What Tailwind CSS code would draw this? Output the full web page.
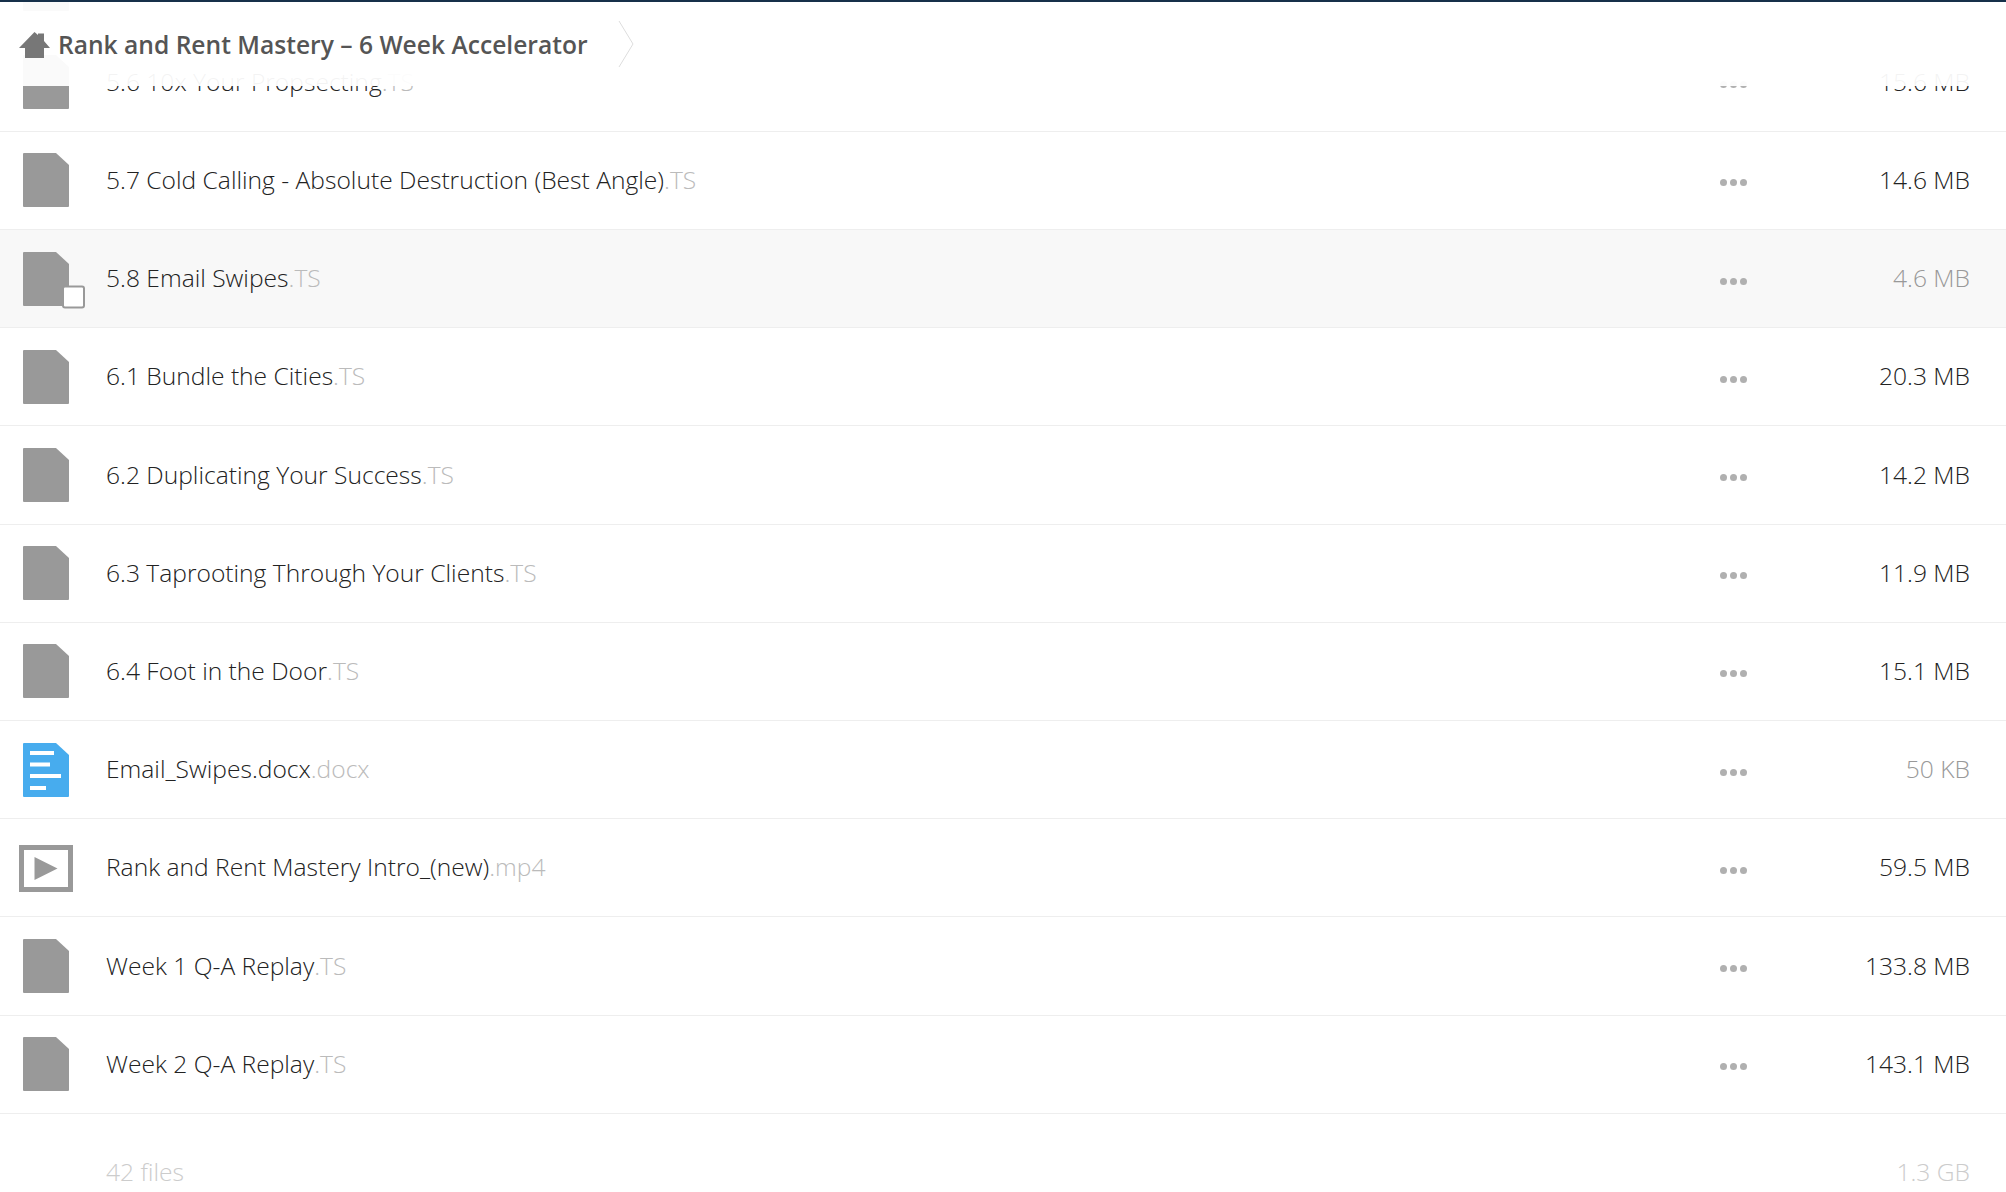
<!DOCTYPE html>
<html lang="en">
<head>
    <meta charset="UTF-8">
    <title>Rank and Rent Mastery – 6 Week Accelerator</title>
    <script src="https://cdn.jsdelivr.net/npm/@tailwindcss/browser@4"></script>
</head>
<body class="relative w-[2006px] h-[1192px] overflow-hidden bg-white font-['Open_Sans',sans-serif] font-light text-[24.6px] text-[#222]">

    <!-- breadcrumb sits over the scrolled list -->
    <div class="absolute top-0 left-0 right-0 z-10 h-[86px] bg-white/95 border-t-2 border-[#16304a] flex items-center">
        <svg class="ml-[19px] w-[31px] h-[26px] mt-[1px]" viewBox="0 0 31 26">
            <path d="M15.500 0 L19 3 L19 1.500 L25 1.500 L25 9 L31 16 L25 16 L25 26 L6 26 L6 16 L0 16 Z" fill="#777"/>
        </svg>
        <span class="ml-[8px] mt-[2px] font-semibold text-[#555]">Rank and Rent Mastery – 6 Week Accelerator</span>
        <svg class="ml-[30px] w-[16px] h-[46px]" viewBox="0 0 16 46">
            <path d="M1 0 L15 23 L1 46" fill="none" stroke="#ddd" stroke-width="1"/>
        </svg>
    </div>

    <div id="rows" class="-mt-[64.5px]"></div>

    <div class="flex h-[118px] items-center text-[#ccc]">
        <div class="w-[106px]"></div>
        <div class="flex-1">42 files</div>
        <div class="pr-[36px]">1.3 GB</div>
    </div>

    <script>
        const fileIcon = `<svg class="w-[54px] h-[54px]" viewBox="0 0 54 54"><path d="M5 0 L37 0 L50 12 L50 53 Q50 54 49 54 L5 54 Q4 54 4 53 L4 1 Q4 0 5 0 Z" fill="#999"/></svg>`;
        const hoverIcon = `<svg class="w-[54px] h-[54px] overflow-visible" viewBox="0 0 54 54"><path d="M5 0 L37 0 L50 12 L50 53 Q50 54 49 54 L5 54 Q4 54 4 53 L4 1 Q4 0 5 0 Z" fill="#999"/><rect x="44" y="34.500" width="21" height="21" rx="2" fill="#fff" stroke="#999" stroke-width="2"/></svg>`;
        const docIcon = `<svg class="w-[54px] h-[54px]" viewBox="0 0 54 54"><path d="M5 0 L37 0 L50 12 L50 53 Q50 54 49 54 L5 54 Q4 54 4 53 L4 1 Q4 0 5 0 Z" fill="#47acee"/><g fill="#fff"><rect x="11" y="8" width="24" height="4"/><rect x="11" y="19.500" width="20" height="4"/><rect x="11" y="31" width="31" height="4"/><rect x="11" y="43" width="16" height="4"/></g></svg>`;
        const videoIcon = `<svg class="w-[54px] h-[54px]" viewBox="0 0 54 54"><rect x="2.500" y="6.500" width="49" height="42" fill="none" stroke="#999" stroke-width="5"/><path d="M15.500 16 L38.500 27.500 L15.500 39 Z" fill="#999"/></svg>`;

        const files = [
            { icon: fileIcon }, // only the bottom of this icon shows under the breadcrumb
            { name: "5.6 10x Your Propsecting", ext: "TS", size: "15.6 MB", icon: fileIcon },
            { name: "5.7 Cold Calling - Absolute Destruction (Best Angle)", ext: "TS", size: "14.6 MB", icon: fileIcon },
            { name: "5.8 Email Swipes", ext: "TS", size: "4.6 MB", icon: hoverIcon, hover: true },
            { name: "6.1 Bundle the Cities", ext: "TS", size: "20.3 MB", icon: fileIcon },
            { name: "6.2 Duplicating Your Success", ext: "TS", size: "14.2 MB", icon: fileIcon },
            { name: "6.3 Taprooting Through Your Clients", ext: "TS", size: "11.9 MB", icon: fileIcon },
            { name: "6.4 Foot in the Door", ext: "TS", size: "15.1 MB", icon: fileIcon },
            { name: "Email_Swipes.docx", ext: "docx", size: "50 KB", icon: docIcon, light: true },
            { name: "Rank and Rent Mastery Intro_(new)", ext: "mp4", size: "59.5 MB", icon: videoIcon },
            { name: "Week 1 Q-A Replay", ext: "TS", size: "133.8 MB", icon: fileIcon },
            { name: "Week 2 Q-A Replay", ext: "TS", size: "143.1 MB", icon: fileIcon },
        ];

        const rows = document.getElementById("rows");
        files.forEach(file => {
            const rowBg = file.hover ? "bg-[#f8f8f8]" : "bg-white";
            const sizeColor = file.hover || file.light ? "text-[#999]" : "text-[#222]";
            const label = file.name ? `${file.name}<span class="text-[#bbb]">.${file.ext}</span>` : "";
            rows.innerHTML += `
                <div class="flex items-center h-[98.2px] border-b border-[#eee] ${rowBg}">
                    <div class="w-[106px] pl-[19px] shrink-0">${file.icon}</div>
                    <div class="flex-1 whitespace-nowrap">${label}</div>
                    <div class="flex gap-[3px] mt-[5px]">
                        <span class="w-[7px] h-[7px] rounded-full bg-[#b0b0b0]"></span>
                        <span class="w-[7px] h-[7px] rounded-full bg-[#b0b0b0]"></span>
                        <span class="w-[7px] h-[7px] rounded-full bg-[#b0b0b0]"></span>
                    </div>
                    <div class="w-[259px] pr-[36px] text-right ${sizeColor}">${file.size || ""}</div>
                </div>
            `;
        });
    </script>
</body>
</html>
